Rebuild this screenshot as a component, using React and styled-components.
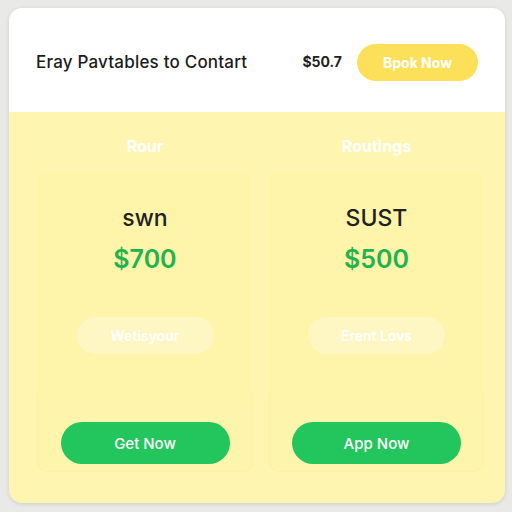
import React from "react";
import styled, { createGlobalStyle } from "styled-components";

const Global = createGlobalStyle`
  html, body { margin: 0; padding: 0; background: #e9e9e7; }
  body { font-family: "Inter", "Open Sans", sans-serif; }
  * { box-sizing: border-box; }
`;

const Page = styled.div`
  width: 512px;
  height: 512px;
  padding: 8px 7px 9px 9px;
`;

const Card = styled.div`
  width: 496px;
  height: 495px;
  border-radius: 13px;
  overflow: hidden;
  background: #fef6b0;
  box-shadow: 0 1px 4px rgba(0, 0, 0, 0.12);
  display: flex;
  flex-direction: column;
`;

const Header = styled.div`
  height: 104px;
  background: #ffffff;
  display: flex;
  align-items: center;
  padding: 0 27px 0 27px;
`;

const Title = styled.div`
  flex: 1;
  font-size: 17px;
  font-weight: 500;
  color: #1c1c1c;
  letter-spacing: 0.2px;
  padding-top: 4px;
`;

const HeaderPrice = styled.div`
  font-size: 14px;
  font-weight: 700;
  color: #222;
  margin-right: 15px;
  padding-top: 3px;
`;

const BookButton = styled.button`
  width: 121px;
  height: 37px;
  border: none;
  border-radius: 19px;
  background: #fde05a;
  color: #ffffff;
  font-family: inherit;
  font-size: 14px;
  font-weight: 700;
  padding: 0;
  margin-top: 4px;
`;

const Body = styled.div`
  flex: 1;
  display: grid;
  grid-template-columns: 216px 215px;
  column-gap: 16px;
  padding: 0 21px 31px 28px;
`;

const Column = styled.div`
  display: flex;
  flex-direction: column;
`;

const ColTitle = styled.div`
  height: 60px;
  display: flex;
  align-items: center;
  justify-content: center;
  padding-top: 8px;
  color: #ffffff;
  font-size: 16px;
  font-weight: 700;
`;

const Plan = styled.div`
  flex: 1;
  border-radius: 10px;
  background: #fef5ad;
  box-shadow: inset 0 0 0 1px rgba(250, 235, 150, 0.35);
  display: flex;
  flex-direction: column;
  align-items: center;
  padding-bottom: 8px;
`;

const PlanTop = styled.div`
  width: 100%;
  height: 230px;
  border-radius: 10px;
  background: #fef4aa;
  display: flex;
  flex-direction: column;
  align-items: center;
  padding-top: 31px;
`;

const PlanName = styled.div`
  font-size: 23px;
  font-weight: 500;
  color: #222222;
  line-height: 30px;
`;

const PlanPrice = styled.div`
  font-size: 25px;
  font-weight: 600;
  color: #21b34f;
  line-height: 34px;
  margin-top: 9px;
`;

const Pill = styled.div`
  width: 137px;
  height: 37px;
  border-radius: 19px;
  margin-top: 41px;
  background: rgba(255, 255, 255, 0.3);
  color: #ffffff;
  font-size: 14px;
  font-weight: 600;
  display: flex;
  align-items: center;
  justify-content: center;
`;

const GreenButton = styled.button`
  width: 169px;
  height: 42px;
  margin-top: 20px;
  border: none;
  border-radius: 21px;
  background: #22c65c;
  color: #ffffff;
  font-family: inherit;
  font-size: 15px;
  font-weight: 500;
`;

const plans = [
  { title: "Rour", name: "swn", price: "$700", pill: "Wetisyour", cta: "Get Now" },
  { title: "Routings", name: "SUST", price: "$500", pill: "Erent Lovs", cta: "App Now" },
];

export default function App() {
  return (
    <Page>
      <Global />
      <Card>
        <Header>
          <Title>Eray Pavtables to Contart</Title>
          <HeaderPrice>$50.7</HeaderPrice>
          <BookButton>Bpok Now</BookButton>
        </Header>
        <Body>
          {plans.map((p) => (
            <Column key={p.title}>
              <ColTitle>{p.title}</ColTitle>
              <Plan>
                <PlanTop>
                  <PlanName>{p.name}</PlanName>
                  <PlanPrice>{p.price}</PlanPrice>
                  <Pill>{p.pill}</Pill>
                </PlanTop>
                <GreenButton>{p.cta}</GreenButton>
              </Plan>
            </Column>
          ))}
        </Body>
      </Card>
    </Page>
  );
}
